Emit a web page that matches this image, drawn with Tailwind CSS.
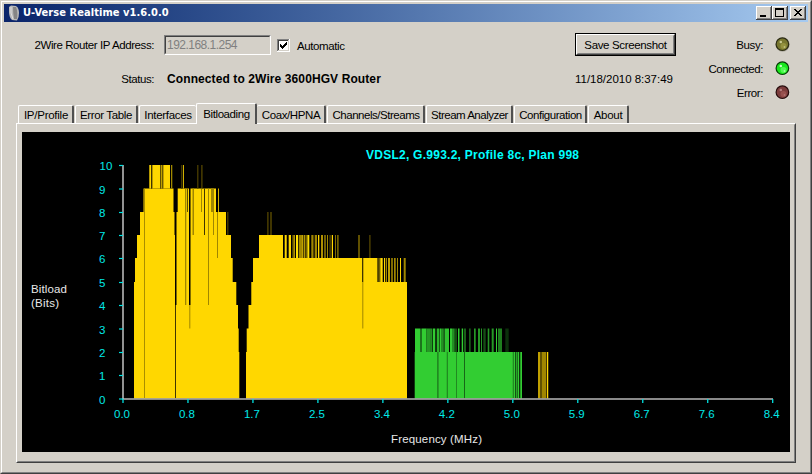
<!DOCTYPE html>
<html lang="en">
<head>
    <meta charset="UTF-8">
    <meta name="viewport" content="width=device-width, initial-scale=1.0">
    <title>U-Verse Realtime v1.6.0.0</title>
    <script src="https://cdn.jsdelivr.net/npm/@tailwindcss/browser@4"></script>
</head>
<body class="bg-[#d4d0c8] overflow-hidden">
    <div class="w-[812px] h-[474px] border border-l-[#d4d0c8] border-t-[#d4d0c8] border-r-[#404040] border-b-[#404040] bg-[#d4d0c8] font-['Liberation_Sans',sans-serif] text-[11.5px] leading-[14px] tracking-[-0.42px] text-black">
        <div class="h-full border border-l-white border-t-white border-r-[#808080] border-b-[#808080] p-[2px] flex flex-col">

            <!-- title bar -->
            <div class="h-[18px] shrink-0 flex items-center bg-linear-to-r from-[#0a246a] to-[#a6caf0] pl-[4px] pr-[2px]">
                <svg class="w-[12px] h-[16px] shrink-0" viewBox="0 0 12 16">
                    <path d="M1 2 L3 0.500 L8 1 Q11 3 11 8 Q11 13 9 15.500 L4 15 Q1 12 1 7 Z" fill="#b8b8b8"/>
                    <path d="M5 2 L8 2 Q10 7 9 14 L6 14 Q5 8 5 2 Z" fill="#858585"/>
                    <path d="M3 2 Q2 8 5 14" stroke="#dedede" fill="none"/>
                </svg>
                <span class="ml-[3px] text-white font-bold text-[11px] tracking-[0.06px] whitespace-nowrap font-['DejaVu_Sans_Condensed','DejaVu_Sans',sans-serif]">U-Verse Realtime v1.6.0.0</span>
                <div class="ml-auto flex">
                    <svg class="w-[16px] h-[14px]" viewBox="0 0 16 14" shape-rendering="crispEdges">
                        <path d="M0 0H16V14H0Z" fill="#404040"/><path d="M0 0H15V13H0Z" fill="#fff"/><path d="M1 1H15V13H1Z" fill="#808080"/><path d="M1 1H14V12H1Z" fill="#d4d0c8"/>
                        <path d="M4 9H10V11H4Z"/>
                    </svg>
                    <svg class="w-[16px] h-[14px]" viewBox="0 0 16 14" shape-rendering="crispEdges">
                        <path d="M0 0H16V14H0Z" fill="#404040"/><path d="M0 0H15V13H0Z" fill="#fff"/><path d="M1 1H15V13H1Z" fill="#808080"/><path d="M1 1H14V12H1Z" fill="#d4d0c8"/>
                        <path d="M3 2H12V11H3Z M4 4V10H11V4Z" fill-rule="evenodd"/>
                    </svg>
                    <svg class="w-[16px] h-[14px] ml-[2px]" viewBox="0 0 16 14" shape-rendering="crispEdges">
                        <path d="M0 0H16V14H0Z" fill="#404040"/><path d="M0 0H15V13H0Z" fill="#fff"/><path d="M1 1H15V13H1Z" fill="#808080"/><path d="M1 1H14V12H1Z" fill="#d4d0c8"/>
                        <path d="M4 3h2v1h1v1h2v-1h1v-1h2v1h-1v1h-1v1h-1v1h1v1h1v1h1v1h-2v-1h-1v-1h-2v1h-1v1h-2v-1h1v-1h1v-1h1v-1h-1v-1h-1v-1h-1z"/>
                    </svg>
                </div>
            </div>

            <!-- connection info -->
            <div class="h-[81px] shrink-0 flex whitespace-nowrap">
                <div class="w-[150px] pt-[16px] flex flex-col items-end gap-[20px]">
                    <span>2Wire Router IP Address:</span>
                    <span>Status:</span>
                </div>
                <div class="w-[421px] pt-[13px] pl-[10px]">
                    <div class="flex items-center">
                        <div class="w-[107px] h-[20px] border border-l-[#808080] border-t-[#808080] border-r-white border-b-white">
                            <div class="h-full border border-l-[#404040] border-t-[#404040] border-r-[#d4d0c8] border-b-[#d4d0c8] pl-px pt-px text-[#808080] text-[12px] tracking-[-0.52px]">192.168.1.254</div>
                        </div>
                        <svg class="w-[13px] h-[13px] ml-[6px]" viewBox="0 0 13 13" shape-rendering="crispEdges">
                            <path d="M0 0H13V13H0Z" fill="#fff"/><path d="M0 0H12V1H1V12H0Z" fill="#808080"/><path d="M1 1H11V2H2V11H1Z" fill="#404040"/><path d="M11 1V11H1V12H12V1Z" fill="#d4d0c8"/>
                            <path d="M3 5h1v1h1v1h1v-1h1v-1h1v-1h1v-1h1v3h-1v1h-1v1h-1v1h-1v1h-1v-1h-1v-1h-1z"/>
                        </svg>
                        <span class="ml-[7px] mt-[2px] tracking-[-0.4px]">Automatic</span>
                    </div>
                    <div class="mt-[17px] ml-[3px] font-bold text-[12px] tracking-[0.1px]">Connected to 2Wire 3600HGV Router</div>
                </div>
                <div class="w-[102px] pt-[11px]">
                    <div class="w-[101px] h-[23px] border border-black">
                        <div class="h-full border border-l-white border-t-white border-r-[#404040] border-b-[#404040]">
                            <div class="h-full border border-l-[#d4d0c8] border-t-[#d4d0c8] border-r-[#808080] border-b-[#808080] flex items-center justify-center pt-px tracking-[-0.35px]">Save Screenshot</div>
                        </div>
                    </div>
                    <div class="mt-[16px] tracking-[-0.02px]">11/18/2010 8:37:49</div>
                </div>
                <div class="w-[86px] pt-[16px] flex flex-col items-end gap-[10px]">
                    <span>Busy:</span>
                    <span>Connected:</span>
                    <span>Error:</span>
                </div>
                <div class="pt-[14px] pl-[11px] flex flex-col gap-[8px]">
                    <svg class="w-[16px] h-[16px]" viewBox="0 0 16 16"><circle cx="8.6" cy="8.7" r="7.1" fill="#aaa69c"/><circle cx="8.4" cy="8.2" r="6.3" fill="#77762e" stroke="#2c2c14" stroke-width="1.2"/><circle cx="9.5" cy="10" r="3" fill="#94923e"/><circle cx="6.8" cy="6" r="1.300" fill="#c8c890"/><circle cx="10.5" cy="11" r="0.900" fill="#c0c080"/></svg>
                    <svg class="w-[16px] h-[16px]" viewBox="0 0 16 16"><circle cx="8.6" cy="8.7" r="7.1" fill="#e0dcd4"/><circle cx="8.4" cy="8.2" r="6.3" fill="#18e81c" stroke="#063c06" stroke-width="1.2"/><circle cx="9.5" cy="10" r="3" fill="#50fa50"/><circle cx="6.8" cy="6" r="1.300" fill="#c8ffc8"/><circle cx="10.5" cy="11" r="0.900" fill="#a0ffa0"/></svg>
                    <svg class="w-[16px] h-[16px]" viewBox="0 0 16 16"><circle cx="8.6" cy="8.7" r="7.1" fill="#e0dcd4"/><circle cx="8.4" cy="8.2" r="6.3" fill="#7c3c3c" stroke="#260c0c" stroke-width="1.2"/><circle cx="9.5" cy="10" r="3" fill="#98504e"/><circle cx="6.8" cy="6" r="1.300" fill="#b88080"/><circle cx="10.5" cy="11" r="0.900" fill="#b07070"/></svg>
                </div>
            </div>

            <!-- tabs -->
            <div class="h-[20px] shrink-0 flex items-end pl-[14px] whitespace-nowrap text-center">
                <div class="w-[56px] h-[18px] rounded-t-[2px] border-l border-t border-white border-r-2 border-r-[#505050] pt-[2px] pl-px tracking-[-0.25px]">IP/Profile</div>
                <div class="w-[63px] ml-px h-[18px] rounded-t-[2px] border-l border-t border-white border-r-2 border-r-[#505050] pt-[2px] tracking-[-0.35px]">Error Table</div>
                <div class="w-[57px] ml-px h-[18px] rounded-t-[2px] border-l border-t border-white pt-[2px] tracking-[-0.3px]">Interfaces</div>
                <div class="w-[61px] h-[21px] -mb-px relative bg-[#d4d0c8] rounded-t-[2px] border-l border-t border-white border-r-2 border-r-[#505050] pt-[3px] pl-px tracking-[-0.42px]">Bitloading</div>
                <div class="w-[69px] h-[18px] rounded-t-[2px] border-t border-white border-r-2 border-r-[#505050] pt-[2px] pl-px tracking-[-0.4px]">Coax/HPNA</div>
                <div class="w-[98px] ml-px h-[18px] rounded-t-[2px] border-l border-t border-white border-r-2 border-r-[#505050] pt-[2px] pl-px tracking-[-0.47px]">Channels/Streams</div>
                <div class="w-[87px] ml-px h-[18px] rounded-t-[2px] border-l border-t border-white border-r-2 border-r-[#505050] pt-[2px] pl-px tracking-[-0.5px]">Stream Analyzer</div>
                <div class="w-[73px] ml-px h-[18px] rounded-t-[2px] border-l border-t border-white border-r-2 border-r-[#505050] pt-[2px] pl-px tracking-[-0.45px]">Configuration</div>
                <div class="w-[41px] ml-px h-[18px] rounded-t-[2px] border-l border-t border-white border-r-2 border-r-[#505050] pt-[2px] tracking-[-0.3px]">About</div>
            </div>
            <div class="ml-[12px] w-[780px] h-[340px] shrink-0 border border-l-white border-t-white border-r-[#404040] border-b-[#404040]">
                <div class="h-full border border-l-[#d4d0c8] border-t-[#d4d0c8] border-r-[#808080] border-b-[#808080] pl-[4px] pt-[7px]">
                    <svg id="chart" class="block w-[768px] h-[320px] bg-black tracking-normal" viewBox="22 132 768 320" font-family="Liberation Sans, sans-serif" font-size="11.5">
                        <text x="366" y="159" fill="#00ffff" font-weight="bold" font-size="12" textLength="213">VDSL2, G.993.2, Profile 8c, Plan 998</text>
                        <text x="31" y="293" fill="#e8e8e8" textLength="36">Bitload</text>
                        <text x="31" y="306.500" fill="#e8e8e8" textLength="28">(Bits)</text>
                        <text x="391" y="443" fill="#e8e8e8" textLength="91">Frequency (MHz)</text>

                        <!-- downstream bands -->
                        <path fill="#ffd700" d="M134 398.500V282H135V258H137V235H140V212H143.500V188.500H173.500V212H174.500V235H175V305H176.500V212H177.700V188.500H189V305H190.500V188.500H216V212H226V235H231V258H232.700V282H236.300V305H238V328.500H238.700V352H239.300V398.500Z"/>
                        <path fill="#ffd700" d="M246 398.500V352H246.700V328.500H248.500V305H251.300V282H253V258H259V235H283V258H377V282H407V398.500Z"/>
                        <!-- upstream band -->
                        <path fill="#32cd32" d="M414.700 398.500V352H522V398.500Z"/>
                        <g id="stripes"></g>
                        <g id="axes"></g>
                    </svg>
                </div>
            </div>
        </div>
    </div>

    <script>
        const ns = "http://www.w3.org/2000/svg";
        const levels = [398.5, 375, 352, 328.5, 305, 282, 258, 235, 212, 188.5, 165];

        // [x1, x2, from bits, to bits, color]
        const stripes = [
            [149.3,151,9,10,"#ffd700"], [151,152,9,10,"#403500"], [152.3,160,9,10,"#ffd700"], [160,161,9,10,"#605000"], [161,162.5,9,10,"#c0a000"], [162.5,163.3,9,10,"#706000"], [163.3,170,9,10,"#ffd700"], [171,172.3,9,10,"#a08800"],
            [181,182.5,9,10,"#403500"], [183,184,9,10,"#d0b000"], [197,198.5,9,10,"#403500"], [201,202.7,9,10,"#403500"],
            [144,144.9,0,9,"#a08600"], [175,176,0,4,"#403500"],
            [185,186.3,4,9,"#a08600"], [187,188,8,9,"#604f00"], [189.3,190.3,3,4,"#a08600"],
            [192.5,194,7,9,"#a08600"], [201,202,8,9,"#a08600"], [204,205,7,9,"#403500"], [208,209,4,9,"#a08600"], [211,213,8,9,"#a08600"], [213,214,7,9,"#a08600"], [218,219,8,9,"#d0b000"], [217,218,6,8,"#a08600"], [227,228.5,7,8,"#403500"],
            [267,268.7,7,8,"#403500"], [270,272,7,8,"#403500"],
            [284.7,286.7,6,7,"#ffd700"], [288.7,291,6,7,"#ffd700"], [292.7,293.5,6,7,"#ffd700"], [294,295,6,7,"#b09000"], [296,298,6,7,"#ffe000"], [298.7,302.3,6,7,"#a08600"], [302.3,303.3,6,7,"#ffd700"], [304.3,305.3,6,7,"#ffd700"], [306,307,6,7,"#705e00"], [307.3,309.3,6,7,"#ffe000"],
            [311.3,313.3,6,7,"#a08600"], [313.3,314.5,6,7,"#604f00"], [315,317,6,7,"#a08600"], [318,319.3,6,7,"#ffd700"], [321,323,6,7,"#b09000"], [324.3,325.7,6,7,"#a08600"], [327,328,6,7,"#a08600"], [329.3,332,6,7,"#403500"], [332,333,6,7,"#ffd700"], [335,336,6,7,"#806b00"], [337,338.7,6,7,"#705e00"],
            [358,360,6,7,"#605000"], [369,370.7,6,7,"#403500"], [362,363.3,5,6,"#403500"], [362.3,363.3,3,5,"#a08600"],
            [377,378.7,5,6,"#705e00"], [379.3,380.3,5,6,"#a08600"], [380.3,382.7,5,6,"#ffd700"], [384,385,5,6,"#ffd700"], [385.7,387,5,6,"#a08600"], [388,390,5,6,"#c0a000"], [391,393,5,6,"#806b00"], [394,395.7,5,6,"#a08600"], [397,398,5,6,"#a08600"], [400,401,5,6,"#ffd700"], [403.7,405.7,5,6,"#a08600"],
            [415,420,2,3,"#32cd32"], [420,422,2,3,"#1c741c"], [422,426.5,2,3,"#32cd32"], [426.5,430.7,2,3,"#259825"], [430.7,431.7,2,3,"#32cd32"], [432.7,435.3,2,3,"#32cd32"], [436.7,439.5,2,3,"#2cb42c"], [440,441,2,3,"#32cd32"], [441.3,442.7,2,3,"#32cd32"], [443,444,2,3,"#1c741c"], [444.5,449,2,3,"#2fc22f"], [450,452.7,2,3,"#32cd32"], [453.3,454.5,2,3,"#32cd32"], [455.3,456.7,2,3,"#1c741c"], [458,459.5,2,3,"#32cd32"], [461.7,463,2,3,"#32cd32"], [463.7,466,2,3,"#196019"], [469,470.7,2,3,"#196019"], [474,475.7,2,3,"#259825"], [478,480,2,3,"#259825"], [481,482,2,3,"#259825"], [483.3,485.7,2,3,"#154e15"], [487.7,489.3,2,3,"#259825"], [491.7,493.7,2,3,"#259825"], [496,497,2,3,"#32cd32"], [498,502,2,3,"#1e7e1e"], [505.3,508.7,2,3,"#0c300c"],
            [437,438.7,0,2,"#218a21"], [446.7,448,0,2,"#218a21"], [456,457,0,2,"#218a21"], [464.3,465,0,2,"#0e3b0e"], [512.7,514,0,2,"#218a21"], [515,516.3,0,2,"#145214"], [517,518,0,2,"#1b6f1b"], [519,520.3,0,2,"#0c300c"],
            [538,540,0,2,"#c0a000"], [540,542,0,2,"#605000"], [542,546,0,2,"#a08600"], [546,547,0,2,"#403500"], [547,548,0,2,"#ffd700"], [548,549,0,2,"#403500"]
        ];

        function add(parent, tag, attrs, text) {
            const el = document.createElementNS(ns, tag);
            for (const key in attrs) el.setAttribute(key, attrs[key]);
            if (text) el.textContent = text;
            document.getElementById(parent).appendChild(el);
        }

        stripes.forEach(([x1, x2, from, to, fill]) => {
            add("stripes", "rect", { x: x1, y: levels[to], width: x2 - x1, height: levels[from] - levels[to], fill });
        });

        add("axes", "path", { d: "M123 165V399", stroke: "#b8b8b8", "stroke-width": 1.6 });
        add("axes", "path", { d: "M122 399H773", stroke: "#b8b8b8", "stroke-width": 1.6 });
        levels.forEach((y, i) => {
            add("axes", "path", { d: `M119 ${y + 0.5}H123`, stroke: "#00e0e0", "stroke-width": 1.2 });
            add("axes", "text", { x: i === 10 ? 99.5 : 99, y: y + 5, fill: "#00e8e8" }, String(i));
        });
        ["0.0", "0.8", "1.7", "2.5", "3.4", "4.2", "5.0", "5.9", "6.7", "7.6", "8.4"].forEach((label, i) => {
            const x = 123 + i * 64.97;
            add("axes", "path", { d: `M${x} 399V403`, stroke: "#00e0e0", "stroke-width": 1.3 });
            add("axes", "text", { x: x - 1, y: 418, fill: "#00e8e8", "text-anchor": "middle" }, label);
        });
    </script>
</body>
</html>
